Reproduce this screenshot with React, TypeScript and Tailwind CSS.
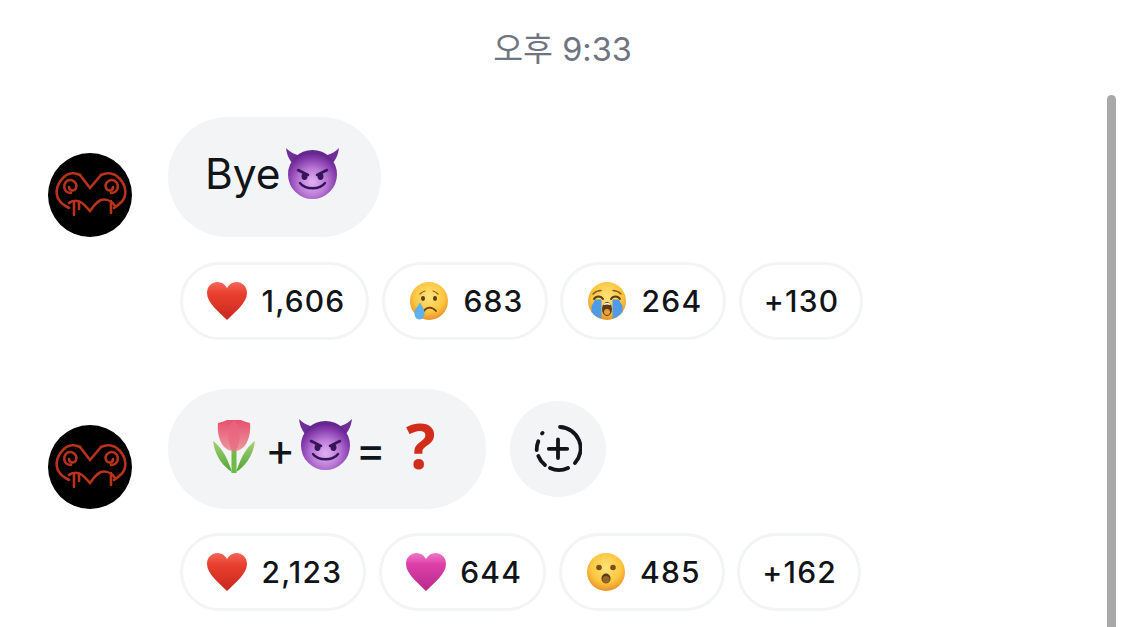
const Devil = ({ className }: { className: string }) => (
    <svg viewBox="0 0 55 51" className={className}>
        <defs>
            <radialGradient id="devilFace" cx="50%" cy="66%" r="60%">
                <stop offset="0%" stopColor="#e2b0f4" />
                <stop offset="45%" stopColor="#bb7dd8" />
                <stop offset="80%" stopColor="#8a3fb0" />
                <stop offset="100%" stopColor="#66268f" />
            </radialGradient>
        </defs>
        <path d="M1 0C2 7 4 12 9 17L17 8C11 7 6 5 1 0Z" fill="#6f2e98" />
        <path d="M54 0C53 7 51 12 46 17L38 8C44 7 49 5 54 0Z" fill="#6f2e98" />
        <circle cx="27.5" cy="26.5" r="24.5" fill="url(#devilFace)" />
        <path d="M13 22L23 27" stroke="#3a1458" strokeWidth="2.6" strokeLinecap="round" />
        <path d="M42 22L32 27" stroke="#3a1458" strokeWidth="2.6" strokeLinecap="round" />
        <ellipse cx="19.5" cy="28.5" rx="3" ry="3.4" fill="#3a1458" />
        <ellipse cx="35.5" cy="28.5" rx="3" ry="3.4" fill="#3a1458" />
        <path d="M15 35C20 42 35 42 40 35" fill="none" stroke="#3a1458" strokeWidth="2.4" strokeLinecap="round" />
    </svg>
);

const Heart = ({ from, to, edge }: { from: string; to: string; edge: string }) => (
    <svg viewBox="0 0 40 40" className="h-10 w-10 shrink-0">
        <defs>
            <linearGradient id={`heart${from.slice(1)}`} x1="0" y1="0" x2="0" y2="1">
                <stop offset="0%" stopColor={from} />
                <stop offset="30%" stopColor={to} />
                <stop offset="100%" stopColor={edge} />
            </linearGradient>
        </defs>
        <path
            d="M20 39C12 31 0 22 0 12C0 5 5 1 10.500 1C14.500 1 18 3 20 7C22 3 25.500 1 29.500 1C35 1 40 5 40 12C40 22 28 31 20 39Z"
            fill={`url(#heart${from.slice(1)})`}
        />
    </svg>
);

const Face = ({ children, id = "faceYellow" }: { children: React.ReactNode; id?: string }) => (
    <svg viewBox="0 0 40 40" className="h-10 w-10 shrink-0">
        <defs>
            <radialGradient id={id} cx="50%" cy="38%" r="62%">
                <stop offset="0%" stopColor="#ffe27a" />
                <stop offset="65%" stopColor="#fbc63f" />
                <stop offset="100%" stopColor="#e8912a" />
            </radialGradient>
        </defs>
        <circle cx="20" cy="20" r="19" fill={`url(#${id})`} />
        {children}
    </svg>
);

const CryFace = () => (
    <Face>
        <path d="M11 13C12.500 11.500 14 10.500 16 10M29 13C27.500 11.500 26 10.500 24 10" stroke="#8a5a1c" strokeWidth="1.200" fill="none" strokeLinecap="round" />
        <ellipse cx="14" cy="17.500" rx="2" ry="2.400" fill="#5d3c16" />
        <ellipse cx="26" cy="17.500" rx="2" ry="2.400" fill="#5d3c16" />
        <path d="M15 30C18 25.500 23 25.500 27 30" stroke="#6b4416" strokeWidth="1.800" fill="none" strokeLinecap="round" />
        <path d="M11 21C12.500 25 15.500 28 15.500 32C15.500 36 13 38.500 10.500 38.500C7 38.500 5.500 35.500 5.500 32C5.500 28 9.500 25 11 21Z" fill="#5fb0ec" />
    </Face>
);

const SobFace = () => (
    <Face>
        <path d="M6 13C8 11 11 9.500 14 9.500M34 13C32 11 29 9.500 26 9.500" stroke="#8a5a1c" strokeWidth="1.500" fill="none" strokeLinecap="round" />
        <path d="M7 18C9 14.500 14 14.500 16 18M24 18C26 14.500 31 14.500 33 18" stroke="#5d3c16" strokeWidth="2" fill="none" strokeLinecap="round" />
        <path d="M8 18.500H14.500V37.500C11 37 8 35 4.500 31V25C5.500 23 7 21 8 18.500Z" fill="#4f9be8" />
        <path d="M25.500 18.500H32C33 21 34.500 23 35.500 25V31C32 35 29 37 25.500 37.500Z" fill="#4f9be8" />
        <ellipse cx="20" cy="28" rx="5" ry="7" fill="#5d3a14" />
        <path d="M16.500 23.500C18 22.500 22 22.500 23.500 23.500" stroke="#fff" strokeWidth="1.500" fill="none" />
        <ellipse cx="20" cy="31" rx="3" ry="3" fill="#e8a13a" />
    </Face>
);

const WowFace = () => (
    <Face>
        <circle cx="13" cy="15.500" r="2.800" fill="#7a5018" />
        <circle cx="27" cy="15.500" r="2.800" fill="#7a5018" />
        <ellipse cx="20" cy="26.500" rx="4.500" ry="5" fill="#5d3a14" />
        <ellipse cx="20" cy="27.500" rx="3.500" ry="3.500" fill="#91672a" />
    </Face>
);

const Tulip = () => (
    <svg viewBox="0 0 44 54" className="h-[54px] w-11 shrink-0 -translate-y-[3px]">
        <defs>
            <linearGradient id="tulipHead" x1="0" y1="0" x2="0" y2="1">
                <stop offset="0%" stopColor="#e8506f" />
                <stop offset="100%" stopColor="#ea9aa0" />
            </linearGradient>
            <linearGradient id="tulipLeaf" x1="0" y1="0" x2="0" y2="1">
                <stop offset="0%" stopColor="#a9cf76" />
                <stop offset="100%" stopColor="#4fa536" />
            </linearGradient>
        </defs>
        <path d="M1 22C8 27 14 35 20 53C12 48 3 38 1 22Z" fill="url(#tulipLeaf)" />
        <path d="M43 22C36 27 30 35 24 53C32 48 41 38 43 22Z" fill="url(#tulipLeaf)" />
        <path d="M19.500 30H24.500V54H19.500Z" fill="#6fbb48" />
        <path d="M6 4C10 3 13 2 15 1H29C31 2 34 3 38 4C39 12 37 30 24 32H20C7 30 5 12 6 4Z" fill="url(#tulipHead)" />
        <path d="M22 1C28 6 30 20 24 32H20C14 20 16 6 22 1Z" fill="#e8667e" opacity="0.7" />
    </svg>
);

const Avatar = () => (
    <div className="h-[84px] w-[84px] shrink-0 overflow-hidden rounded-full bg-black">
        <svg viewBox="0 0 84 84" className="h-full w-full">
            <defs>
                <filter id="avatarBlur">
                    <feGaussianBlur stdDeviation="0.7" />
                </filter>
            </defs>
            <g fill="none" stroke="#b9301f" strokeWidth="2.600" strokeLinecap="round" filter="url(#avatarBlur)">
                <path d="M32 22L42 35L53 22" />
                <path d="M32 22C26 19 19 20 15 25C8 32 7 41 11 47C13 50 17 53 21 55" />
                <path d="M53 22C59 19 67 20 71 25C78 32 79 41 75 47C73 50 69 53 66 55" />
                <path d="M23 40C16 40 14 32 19 28C24 25 30 30 28 35C26 39 21 38 21 34" />
                <path d="M63 40C70 40 72 32 67 28C62 25 56 30 58 35C60 39 65 38 65 34" />
                <path d="M21 50C24 47 31 47 34 50C37 52 39 55 42 58C45 54 48 49 53 47C57 46 63 47 67 53" />
                <path d="M26 49V62M31 49V56M63 48V60" />
            </g>
        </svg>
    </div>
);

const Chip = ({ icon, count }: { icon?: React.ReactNode; count: string }) => (
    <div className={`flex h-[78px] items-center gap-[14.500px] rounded-full border-[3px] border-[#f3f4f6] bg-white pr-[21px] text-[30px] font-medium tracking-[1.2px] text-[#111418] ${icon ? "pl-[24px]" : "pl-[22px]"}`}>
        {icon}
        <span>{count}</span>
    </div>
);

const Bubble = ({ children, className }: { children: React.ReactNode; className: string }) => (
    <div className={`flex h-[120px] items-center rounded-[60px] bg-[#f3f4f6] text-[#111418] ${className}`}>{children}</div>
);

const redHeart = <Heart from="#f5675c" to="#e9402f" edge="#c8281d" />;
const pinkHeart = <Heart from="#ee7ac6" to="#dc3fa8" edge="#b92a8c" />;

export default function App() {
    return (
        <div className="relative h-[627px] w-[1125px] overflow-hidden bg-white font-['Inter','Noto_Sans_CJK_KR',sans-serif]">
            <div className="flex h-[117px] justify-center pt-[25px] text-[32.500px] leading-[50px] text-[#6f7580]">오후 9:33</div>

            <div className="flex items-end gap-[36px] pl-[48px]">
                <Avatar />
                <Bubble className="w-[213px] gap-[4px] pl-[37px] text-[42.500px]">
                    <span className="-translate-y-[3px] leading-none">Bye</span>
                    <Devil className="h-[51px] w-[55px] -translate-y-[4px]" />
                </Bubble>
            </div>
            <div className="mt-[25px] flex gap-[12.500px] pl-[180px]">
                <Chip icon={redHeart} count="1,606" />
                <Chip icon={<CryFace />} count="683" />
                <Chip icon={<SobFace />} count="264" />
                <Chip count="+130" />
            </div>

            <div className="mt-[49px] flex items-end gap-[36px] pl-[48px]">
                <Avatar />
                <div className="flex items-end gap-[24px]">
                    <Bubble className="w-[318px] pl-[44px]">
                        <Tulip />
                        <span className="ml-[9px] text-[46px] leading-none">+</span>
                        <Devil className="ml-[3px] h-[51px] w-[55px] -translate-y-[5px]" />
                        <span className="ml-[2px] text-[46px] leading-none">=</span>
                        <span className="ml-[20px] -translate-y-[4px] font-['Open_Sans',sans-serif] text-[62px] leading-none font-bold text-[#d12c1c]">?</span>
                    </Bubble>
                    <div className="mb-[12px] flex h-[96px] w-[96px] items-center justify-center rounded-full bg-[#f3f4f6]">
                        <svg viewBox="0 0 48 48" className="h-12 w-12" fill="none" stroke="#111418" strokeWidth="3.800" strokeLinecap="round">
                            <path d="M26 2A21.500 21.500 0 0 1 41 38" />
                            <path d="M34 43A21.500 21.500 0 0 1 16 43" />
                            <path d="M11 40A21.500 21.500 0 0 1 4.300 31" />
                            <path d="M2.700 25A21.500 21.500 0 0 1 4.300 16.300" />
                            <path d="M8 8.500L8.600 7.900" />
                            <path d="M24 14.500V33M14.800 23.800H33.200" />
                        </svg>
                    </div>
                </div>
            </div>
            <div className="mt-[24px] flex gap-[12.500px] pl-[180px]">
                <Chip icon={redHeart} count="2,123" />
                <Chip icon={pinkHeart} count="644" />
                <Chip icon={<WowFace />} count="485" />
                <Chip count="+162" />
            </div>

            <div className="absolute top-[95px] bottom-0 left-[1107px] w-[9px] rounded-t-full bg-[#a8a8a8]" />
        </div>
    );
}
